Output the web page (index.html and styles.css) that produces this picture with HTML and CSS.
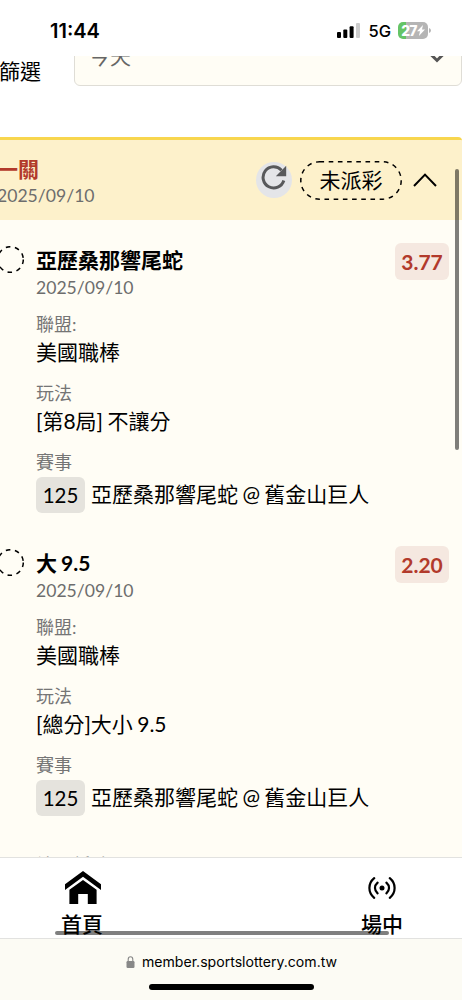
FILE: index.html
```html
<!DOCTYPE html>
<html lang="zh-Hant">
<head>
    <meta charset="UTF-8">
    <meta name="viewport" content="width=device-width, initial-scale=1.0">
    <title>投注紀錄</title>
    <link rel="stylesheet" href="styles.css">
</head>
<body>
    <div class="status-bar">
        <span class="time">11:44</span>
        <div class="status-icons">
            <svg class="signal" width="23" height="15" viewBox="0 0 23 15">
                <rect x="0" y="9" width="4" height="6" rx="1"/>
                <rect x="6.3" y="6.5" width="4" height="8.5" rx="1"/>
                <rect x="12.6" y="3.3" width="4" height="11.7" rx="1"/>
                <rect x="19" y="0" width="4" height="15" rx="1" fill="#ccc"/>
            </svg>
            <span class="network">5G</span>
            <div class="battery">
                <span>27</span>
                <svg width="8" height="11" viewBox="0 0 8 11"><path d="M6 0 0 6.2h3L1.9 11 8 4.5h-3z" fill="#fff"/></svg>
            </div>
            <svg class="battery-cap" width="2" height="5" viewBox="0 0 2 5"><path d="M0 0q2 .8 2 2.5T0 5z" fill="#b5b5b5"/></svg>
        </div>
    </div>

    <div class="filter">
        <span class="filter-label">篩選</span>
        <div class="select">
            <span>今天</span>
            <svg width="16" height="10" viewBox="0 0 16 10"><path d="M2 1.5l6 6 6-6" fill="none" stroke="#555" stroke-width="3"/></svg>
        </div>
    </div>

    <main class="ticket">
        <header class="ticket-header">
            <div class="ticket-title">
                <h2>一關</h2>
                <p class="date">2025/09/10</p>
            </div>
            <div class="refresh">
                <svg width="26" height="26" viewBox="0 0 26 26">
                    <path d="M22.8 15.5A10.6 10.6 0 1 1 20.5 5.2" fill="none" stroke="#58595b" stroke-width="3"/>
                    <path d="M25.2 0.8V11.2H14.8z" fill="#58595b"/>
                </svg>
            </div>
            <div class="pill">
                <svg width="102" height="39" viewBox="0 0 102 39"><rect x=".8" y=".8" width="100.4" height="37.4" rx="18.7"/></svg>
                <span>未派彩</span>
            </div>
            <svg class="chevron" width="24" height="14" viewBox="0 0 24 14"><path d="M1 13 12 1.6 23 13" fill="none" stroke="#000" stroke-width="2"/></svg>
        </header>

        <section class="bet">
            <svg class="state" width="27" height="27" viewBox="0 0 27 27"><circle cx="13.5" cy="13.5" r="12.8"/></svg>
            <div class="bet-info">
                <h3>亞歷桑那響尾蛇</h3>
                <p class="date">2025/09/10</p>
                <dl>
                    <dt>聯盟:</dt>
                    <dd>美國職棒</dd>
                    <dt>玩法</dt>
                    <dd>[第8局] 不讓分</dd>
                    <dt>賽事</dt>
                    <dd class="match"><span class="code">125</span><span class="teams">亞歷桑那響尾蛇 @ 舊金山巨人</span></dd>
                </dl>
            </div>
            <span class="odds">3.77</span>
        </section>

        <section class="bet">
            <svg class="state" width="27" height="27" viewBox="0 0 27 27"><circle cx="13.5" cy="13.5" r="12.8"/></svg>
            <div class="bet-info">
                <h3>大 9.5</h3>
                <p class="date">2025/09/10</p>
                <dl>
                    <dt>聯盟:</dt>
                    <dd>美國職棒</dd>
                    <dt>玩法</dt>
                    <dd>[總分]大小 9.5</dd>
                    <dt>賽事</dt>
                    <dd class="match"><span class="code">125</span><span class="teams">亞歷桑那響尾蛇 @ 舊金山巨人</span></dd>
                </dl>
            </div>
            <span class="odds">2.20</span>
        </section>

        <p class="serial">注單編號</p>
        <div class="scroll-y"></div>
    </main>

    <nav class="tabs">
        <a class="tab tab-home">
            <svg width="36" height="33" viewBox="0 0 36 33">
                <path d="M18 0 36 13.2V19L18 5.8 0 19V13.2z"/>
                <path d="M18 9 31.6 18.8V33H22.8V23H13.2V33H4.4V18.8z"/>
            </svg>
            <span>首頁</span>
        </a>
        <a class="tab tab-live">
            <svg width="28" height="22" viewBox="0 0 28 22" fill="none" stroke="#000" stroke-width="2.2" stroke-linecap="round">
                <path d="M6.2 1.2C-.2 6.5-.2 15.5 6.2 20.8M21.8 1.2c6.4 5.3 6.4 14.3 0 19.6M9.6 5.6c-3.5 3-3.5 7.8 0 10.8M18.4 5.6c3.5 3 3.5 7.8 0 10.8"/>
                <circle cx="14" cy="11" r="2.5" fill="#000" stroke="none"/>
            </svg>
            <span>場中</span>
        </a>
        <div class="scroll-x"></div>
    </nav>

    <footer class="browser-bar">
        <div class="address">
            <svg width="9" height="12" viewBox="0 0 9 12">
                <rect x=".5" y="5" width="8" height="7" rx="1.2" fill="#888"/>
                <path d="M2.2 5.5V3.4a2.3 2.6 0 0 1 4.6 0V5.5" fill="none" stroke="#888" stroke-width="1.1"/>
            </svg>
            <span>member.sportslottery.com.tw</span>
        </div>
        <div class="home-indicator"></div>
    </footer>
</body>
</html>
```

FILE: styles.css
```css
* {
    box-sizing: border-box;
}

body {
    margin: 0;
    width: 462px;
    height: 1000px;
    overflow: hidden;
    display: flex;
    flex-direction: column;
    background: #fff;
    color: #000;
    font-family: Lato, "Noto Sans CJK TC", sans-serif;
    font-size: 21px;
    word-spacing: -1px;
}

h2, h3, p, dl, dd {
    margin: 0;
}

/* Phone status bar */
.status-bar {
    flex: none;
    height: 56px;
    padding: 5px 31px 0 50px;
    display: flex;
    align-items: center;
    justify-content: space-between;
    font-family: Inter, sans-serif;
}

.time {
    font-size: 20px;
    font-weight: 600;
}

.status-icons {
    display: flex;
    align-items: center;
}

.signal {
    margin-left: 1px;
}

.network {
    margin: 0 7px 0 8px;
    font-size: 16.5px;
    font-weight: 500;
}

.battery {
    display: flex;
    align-items: center;
    justify-content: center;
    width: 30px;
    height: 17px;
    border-radius: 5px;
    background: linear-gradient(90deg, #65c466 27%, #b5b5b5 27%);
    color: #fff;
    font-size: 14px;
    font-weight: 800;
    letter-spacing: -0.8px;
}

.battery-cap {
    margin-left: 1px;
}

/* Filter row */
.filter {
    flex: none;
    height: 81px;
    overflow: hidden;
    display: flex;
    align-items: flex-start;
}

.filter-label {
    width: 75px;
    margin-left: -1px;
    line-height: 30px;
    flex: none;
}

.select {
    flex: none;
    width: 388px;
    height: 50px;
    margin-top: -20px;
    padding: 0 16px 7px 14px;
    display: flex;
    align-items: center;
    justify-content: space-between;
    border: 1px solid #dfddd6;
    border-radius: 6px;
    background: #fffdf5;
    color: #666;
}

.select span {
    margin-bottom: 5px;
}

/* Ticket card */
.ticket {
    flex: none;
    position: relative;
    height: 720px;
    overflow: hidden;
    border-top: 3px solid #f8d64e;
    border-top-right-radius: 4px;
    background: #fffdf5;
}

.ticket-header {
    display: flex;
    align-items: center;
    height: 80px;
    margin-bottom: 26px;
    padding-right: 25px;
    background: #fdf1cb;
}

.ticket-title {
    margin: 2px auto 0 -3px;
}

.ticket-title h2 {
    color: #b23a2b;
    font-size: 21px;
    line-height: 30px;
}

.date {
    color: #6d6d6d;
    font-size: 17.6px;
    line-height: 24px;
}

.refresh {
    width: 36px;
    height: 36px;
    margin-right: 8px;
    padding: 3px 0 0 5px;
    border-radius: 50%;
    background: #e4e5e8;
}

.refresh svg {
    display: block;
}

.pill {
    display: grid;
    place-items: center;
    margin-right: 11px;
}

.pill svg,
.pill span {
    grid-area: 1 / 1;
}

.pill span {
    margin-bottom: 2px;
}

.pill rect,
.state circle {
    fill: none;
    stroke: #000;
    stroke-width: 1.5;
    stroke-dasharray: 4.6 4.6;
}

/* One bet in the ticket */
.bet {
    display: flex;
    align-items: flex-start;
    padding-right: 13px;
    margin-bottom: 36px;
}

.state {
    flex: none;
    margin: 0 12px 0 -3px;
}

.bet-info {
    flex: 1;
    margin-top: -1px;
}

.bet h3 {
    font-size: 21px;
    line-height: 30px;
}

.bet .date {
    margin-top: 1px;
}

.bet dl {
    margin-top: 12px;
}

.bet dt {
    color: #757575;
    font-size: 18px;
    line-height: 24px;
    margin-bottom: 1px;
}

.bet dd {
    line-height: 30px;
    margin-bottom: 14px;
    white-space: nowrap;
}

.bet .match {
    display: flex;
    align-items: center;
    gap: 6px;
    height: 36px;
    margin: 3px 0 0;
}

.teams {
    margin-bottom: 2px;
}

.code {
    width: 49px;
    line-height: 36px;
    border-radius: 6px;
    background: #e5e3dd;
    font-size: 20.5px;
    text-align: center;
}

.odds {
    flex: none;
    width: 54px;
    margin-top: -3px;
    padding-top: 1px;
    line-height: 36px;
    border-radius: 6px;
    background: #f5e8e0;
    color: #b23a2b;
    font-size: 21px;
    font-weight: 700;
    text-align: center;
}

.serial {
    padding: 1px 0 0 37px;
    color: #757575;
    font-size: 18px;
    line-height: 24px;
}

.scroll-y {
    position: absolute;
    top: 29px;
    right: 3px;
    width: 4px;
    height: 281px;
    border-radius: 2px;
    background: rgba(0, 0, 0, 0.5);
}

/* Bottom tabs */
.tabs {
    flex: none;
    position: relative;
    display: flex;
    justify-content: space-between;
    height: 82px;
    padding: 0 59px 0 61px;
    border-top: 1px solid #e2e2e0;
    border-bottom: 1px solid #e2e2e0;
    background: #fff;
}

.tab {
    display: flex;
    flex-direction: column;
    align-items: center;
    justify-content: flex-end;
    font-weight: 500;
    line-height: 30px;
}

.tab-home svg {
    margin: 0 -1px 5px 0;
}

.tab-live svg {
    margin-bottom: 10px;
}

.tab span {
    margin-bottom: -1px;
}

.scroll-x {
    position: absolute;
    left: 55px;
    bottom: 3px;
    width: 334px;
    height: 4px;
    border-radius: 2px;
    background: rgba(0, 0, 0, 0.5);
}

/* Browser address bar */
.browser-bar {
    flex: none;
    height: 61px;
    display: flex;
    flex-direction: column;
    align-items: center;
    background: #fcfbf4;
}

.address {
    display: flex;
    align-items: center;
    gap: 7px;
    height: 45px;
    padding-left: 1px;
    font-family: Inter, sans-serif;
    font-size: 14.1px;
}

.home-indicator {
    width: 165px;
    height: 6px;
    border-radius: 3px;
    background: #000;
}
```
